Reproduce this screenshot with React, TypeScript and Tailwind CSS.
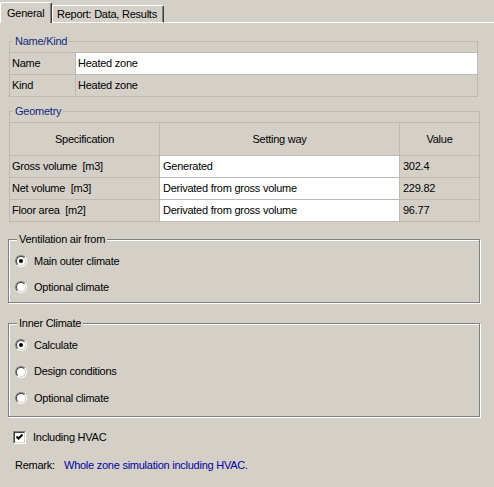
import React from "react";

const LINE = "border-[#bdbab3]";

function Radio({ checked }: { checked?: boolean }) {
  return (
    <div className="w-[12px] h-[12px] rounded-full border border-t-[#808080] border-l-[#808080] border-b-white border-r-white flex">
      <div className="flex-1 rounded-full border border-t-[#404040] border-l-[#404040] border-b-[#d4d0c8] border-r-[#d4d0c8] bg-white flex items-center justify-center">
        {checked && <div className="w-[4px] h-[4px] rounded-full bg-black" />}
      </div>
    </div>
  );
}

function RadioRow({ label, checked, h }: { label: string; checked?: boolean; h: string }) {
  return (
    <div className={`flex items-center ${h} pl-[6px]`}>
      <Radio checked={checked} />
      <span className="ml-[7px]">{label}</span>
    </div>
  );
}

function GeoRow({ a, b, c }: { a: string; b: string; c: string }) {
  return (
    <div className={`flex h-[22px] border-t ${LINE}`}>
      <div className={`w-[150px] border-r ${LINE} pl-[2px] flex items-center whitespace-pre`}>{a}</div>
      <div className={`w-[240px] border-r ${LINE} bg-white pl-[3px] flex items-center`}>{b}</div>
      <div className="flex-1 pl-[3px] flex items-center">{c}</div>
    </div>
  );
}

export default function App() {
  return (
    <div className="w-[494px] h-[487px] bg-[#d4d0c8] overflow-hidden text-[11px] leading-[13px] tracking-[-0.25px] text-black font-['Liberation_Sans',Arial,sans-serif]">
      {/* Tabs */}
      <div className="flex items-end h-[23px]">
        <div className="h-[21px] w-[52px] border-l border-t border-white border-r border-r-[#404040] shadow-[inset_-1px_0_0_#808080] rounded-t-[2px] flex items-center pl-[6px]">
          General
        </div>
        <div className="h-[18px] w-[112px] border-t border-l border-white border-b border-r border-r-[#404040] shadow-[inset_-1px_0_0_#808080] rounded-t-[2px] flex items-center pl-[4px] whitespace-nowrap">
          Report: Data, Results
        </div>
        <div className="flex-1 border-b border-white" />
      </div>

      {/* Name/Kind */}
      <div className={`relative ml-[9px] w-[469px] mt-[18px] border ${LINE} pt-[10px]`}>
        <span className="absolute top-[-7px] left-[3px] px-[2px] bg-[#d4d0c8] text-[#13287a]">Name/Kind</span>
        <div className={`flex h-[22px] border-t ${LINE}`}>
          <div className={`w-[66px] border-r ${LINE} pl-[2px] flex items-center`}>Name</div>
          <div className="flex-1 bg-white pl-[2px] flex items-center">Heated zone</div>
        </div>
        <div className={`flex h-[22px] border-t ${LINE}`}>
          <div className={`w-[66px] border-r ${LINE} pl-[2px] flex items-center`}>Kind</div>
          <div className="flex-1 pl-[2px] flex items-center">Heated zone</div>
        </div>
      </div>

      {/* Geometry */}
      <div className={`relative ml-[9px] w-[471px] mt-[14px] border ${LINE} pt-[10px]`}>
        <span className="absolute top-[-7px] left-[3px] px-[2px] bg-[#d4d0c8] text-[#13287a]">Geometry</span>
        <div className={`flex h-[33px] border-t ${LINE}`}>
          <div className={`w-[150px] border-r ${LINE} flex items-center justify-center`}>Specification</div>
          <div className={`w-[240px] border-r ${LINE} flex items-center justify-center`}>Setting way</div>
          <div className="flex-1 flex items-center justify-center">Value</div>
        </div>
        <GeoRow a="Gross volume  [m3]" b="Generated" c="302.4" />
        <GeoRow a="Net volume  [m3]" b="Derivated from gross volume" c="229.82" />
        <GeoRow a="Floor area  [m2]" b="Derivated from gross volume" c="96.77" />
      </div>

      {/* Ventilation */}
      <div className="relative ml-[8px] w-[472px] mt-[17px] border border-[#808080] shadow-[1px_1px_0_#fff,inset_1px_1px_0_#fff] pt-[8px] pb-[2px]">
        <span className="absolute top-[-7px] left-[8px] px-[2px] bg-[#d4d0c8]">Ventilation air from</span>
        <RadioRow label="Main outer climate" checked h="h-[26px]" />
        <RadioRow label="Optional climate" h="h-[26px]" />
      </div>

      {/* Inner Climate */}
      <div className="relative ml-[8px] w-[472px] mt-[20px] border border-[#808080] shadow-[1px_1px_0_#fff,inset_1px_1px_0_#fff] pt-[8px] pb-[5px]">
        <span className="absolute top-[-7px] left-[8px] px-[2px] bg-[#d4d0c8]">Inner Climate</span>
        <RadioRow label="Calculate" checked h="h-[26px]" />
        <RadioRow label="Design conditions" h="h-[27px]" />
        <RadioRow label="Optional climate" h="h-[26px]" />
      </div>

      {/* Checkbox */}
      <div className="flex items-center h-[13px] mt-[14px] ml-[13px]">
        <div className="w-[13px] h-[13px] border border-t-[#808080] border-l-[#808080] border-b-white border-r-white flex">
          <div className="flex-1 border border-t-[#404040] border-l-[#404040] border-b-[#d4d0c8] border-r-[#d4d0c8] bg-white">
            <svg width="9" height="9" viewBox="0 0 9 9" className="block">
              <polyline points="1.5,3.5 3.5,5.5 7.5,1.5" fill="none" stroke="#000" strokeWidth="2" />
            </svg>
          </div>
        </div>
        <span className="ml-[7px]">Including HVAC</span>
      </div>

      {/* Remark */}
      <div className="flex items-center h-[13px] mt-[15px] pl-[15px]">
        <span className="w-[49px]">Remark:</span>
        <span className="text-[#0000a0]">Whole zone simulation including HVAC.</span>
      </div>
    </div>
  );
}
